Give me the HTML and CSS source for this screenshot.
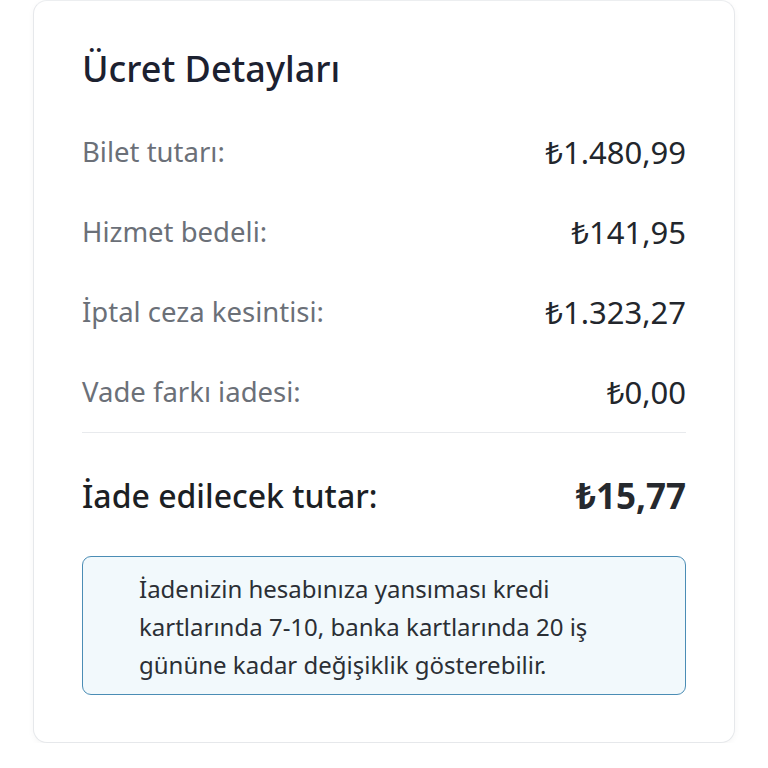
FILE: index.html
```html
<!DOCTYPE html>
<html lang="tr">
<head>
    <meta charset="UTF-8">
    <meta name="viewport" content="width=device-width, initial-scale=1.0">
    <title>Ücret Detayları</title>
    <link rel="stylesheet" href="styles.css">
</head>
<body>
    <div class="ucret-kart">
        <h2 class="baslik">Ücret Detayları</h2>

        <div class="satirlar">
            <div class="satir">
                <span class="etiket">Bilet tutarı:</span>
                <span class="tutar">₺1.480,99</span>
            </div>
            <div class="satir">
                <span class="etiket">Hizmet bedeli:</span>
                <span class="tutar">₺141,95</span>
            </div>
            <div class="satir">
                <span class="etiket">İptal ceza kesintisi:</span>
                <span class="tutar">₺1.323,27</span>
            </div>
            <div class="satir">
                <span class="etiket">Vade farkı iadesi:</span>
                <span class="tutar">₺0,00</span>
            </div>
        </div>

        <div class="satir toplam">
            <span class="etiket">İade edilecek tutar:</span>
            <span class="tutar">₺15,77</span>
        </div>

        <div class="bilgi-kutusu">
            İadenizin hesabınıza yansıması kredi kartlarında 7-10, banka kartlarında 20 iş gününe kadar değişiklik gösterebilir.
        </div>
    </div>
</body>
</html>
```

FILE: styles.css
```css
body {
    margin: 0;
    font-family: "Noto Sans", "DejaVu Sans", sans-serif;
    background-color: #fff;
    color: #1f2329;
}

.ucret-kart {
    margin: 0 33px;
    padding: 46px 48px 47px;
    border: 1px solid #e6e8eb;
    border-top-color: #eceef0;
    border-radius: 14px;
    background-color: #fff;
    box-shadow: 0 2px 6px rgba(0, 0, 0, 0.04);
}

.baslik {
    margin: 0 0 21px;
    font-size: 36px;
    line-height: 44px;
    font-weight: 500;
    color: #1c2130;
}

.satirlar {
    border-bottom: 1px solid #e8eaed;
}

.satir {
    display: flex;
    justify-content: space-between;
    align-items: center;
    height: 80px;
    font-size: 27.5px;
    line-height: 38px;
}

.etiket {
    color: #6b7078;
}

.tutar {
    font-size: 31px;
    color: #22262c;
}

.satir.toplam {
    margin-top: 23px;
    font-size: 32px;
    line-height: 40px;
}

.toplam .etiket {
    color: #1c1f24;
    font-weight: 500;
}

.toplam .tutar {
    font-size: 35px;
    color: #26292e;
    font-weight: 700;
}

.bilgi-kutusu {
    margin-top: 20px;
    padding: 13px 90px 10px 56px;
    border: 1px solid #4b8db5;
    border-radius: 9px;
    background-color: #f2f9fc;
    font-size: 24px;
    line-height: 38px;
    color: #2b2f35;
}
```
